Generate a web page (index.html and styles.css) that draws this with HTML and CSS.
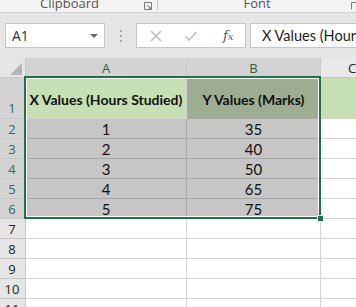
FILE: index.html
```html
<!DOCTYPE html>
<html>
<head>
<meta charset="utf-8">
<link rel="stylesheet" href="styles.css">
</head>
<body>
<div class="app">
  <div class="ribbon">
    <div class="group g-clip"><span class="glabel">Clipboard</span>
      <svg class="launch" width="8" height="8" viewBox="0 0 8 8"><path d="M0.5 7.5V0.5H7.5V7.5H0.5" fill="none" stroke="#7a7a7a" stroke-width="1"/><path d="M3 3L7 7M4.5 7H7V4.5" fill="none" stroke="#7a7a7a" stroke-width="1"/></svg>
    </div>
    <div class="sep"></div>
    <div class="group g-font"><span class="glabel">Font</span>
      <svg class="launch" width="8" height="8" viewBox="0 0 8 8"><path d="M0.5 7.5V0.5H7.5" fill="none" stroke="#7a7a7a" stroke-width="1"/></svg>
    </div>
  </div>
  <div class="fbar">
    <div class="namebox"><span class="nb-text">A1</span>
      <svg class="dd" width="8" height="4" viewBox="0 0 8 4"><path d="M0 0H8L4 4Z" fill="#6a6a6a"/></svg>
    </div>
    <div class="dots"><i></i><i></i><i></i></div>
    <div class="fxbox">
      <svg class="ic" width="14" height="14" viewBox="0 0 14 14"><path d="M2 2L12 12M12 2L2 12" stroke="#bdbdbd" stroke-width="1.6" fill="none"/></svg>
      <svg class="ic" width="14" height="14" viewBox="0 0 14 14"><path d="M1.5 7.5L5 11L12.5 3" stroke="#bdbdbd" stroke-width="1.6" fill="none"/></svg>
      <span class="fx">f<span class="fxx">x</span></span>
    </div>
    <div class="finput">X Values (Hours Studied)</div>
  </div>
  <div class="sheet">
    <div class="grid">
      <div class="corner"><span class="tri"></span></div>
      <div class="ch sel">A</div>
      <div class="ch sel">B</div>
      <div class="ch chc">C</div>

      <div class="rh sel r1">1</div>
      <div class="c r1 g1 bold">X Values (Hours Studied)</div>
      <div class="c r1 g1s bold">Y Values (Marks)</div>
      <div class="c r1 g1 last"></div>

      <div class="rh sel">2</div><div class="c s">1</div><div class="c s">35</div><div class="c last"></div>
      <div class="rh sel">3</div><div class="c s">2</div><div class="c s">40</div><div class="c last"></div>
      <div class="rh sel">4</div><div class="c s">3</div><div class="c s">50</div><div class="c last"></div>
      <div class="rh sel">5</div><div class="c s">4</div><div class="c s">65</div><div class="c last"></div>
      <div class="rh sel">6</div><div class="c s">5</div><div class="c s">75</div><div class="c last"></div>
      <div class="rh">7</div><div class="c"></div><div class="c"></div><div class="c last"></div>
      <div class="rh">8</div><div class="c"></div><div class="c"></div><div class="c last"></div>
      <div class="rh">9</div><div class="c"></div><div class="c"></div><div class="c last"></div>
      <div class="rh">10</div><div class="c"></div><div class="c"></div><div class="c last"></div>
      <div class="rh">11</div><div class="c"></div><div class="c"></div><div class="c last"></div>
    </div>
    <div class="selbox"></div>
    <div class="handle"></div>
  </div>
</div>
</body>
</html>
```
FILE: styles.css
```css
html, body { margin: 0; padding: 0; }
body { width: 356px; height: 307px; overflow: hidden; background: #fff; }
.app { width: 356px; height: 307px; overflow: hidden; font-family: "Open Sans", "Noto Sans", sans-serif; }

.ribbon {
  height: 12px; background: #f3f3f3; border-bottom: 1px solid #d4d4d4;
  display: flex; overflow: hidden;
}
.group { position: relative; display: flex; justify-content: center; }
.g-clip { width: 157px; }
.g-font { flex: 1; }
.glabel { font-size: 13px; color: #555; line-height: 12px; margin-top: -3px; }
.g-clip .glabel { margin-left: -18px; }
.launch { position: absolute; right: 5px; top: 2px; }
.g-font .launch { right: -3px; }
.sep { width: 1px; height: 10px; background: #c6c6c6; }

.fbar {
  height: 45px; background: #e6e6e6;
  display: flex; align-items: flex-start; padding-top: 10px; box-sizing: border-box;
  border-bottom: 1px solid #e0e0e0;
}
.namebox {
  margin-left: 5px; width: 100px; height: 25px; box-sizing: border-box;
  background: #fff; border: 1px solid #c6c6c6;
  display: flex; align-items: center; justify-content: space-between;
  padding: 0 6px 0 6px;
}
.nb-text { font-size: 14px; color: #333; }
.dd { margin-top: 1px; }
.dots { width: 31px; display: flex; flex-direction: column; align-items: center; gap: 3px; padding-top: 7px; }
.dots i { display: block; width: 2px; height: 2px; background: #a8a8a8; }
.fxbox {
  width: 110px; height: 25px; box-sizing: border-box; background: #fff; border: 1px solid #c6c6c6;
  display: flex; align-items: center; padding-left: 12px;
}
.fxbox .ic:first-child { margin-right: 21px; }
.fx { font-family: "DejaVu Serif", "Liberation Serif", serif; font-style: italic; font-size: 13px; color: #555; margin-left: 25px; }
.fxx { font-size: 10px; }
.finput {
  margin-left: 4px; flex: 1; height: 25px; box-sizing: border-box; background: #fff; border: 1px solid #c6c6c6;
  border-right: none; white-space: nowrap; overflow: hidden;
  font-family: "Lato", "Open Sans", sans-serif; font-size: 14.5px; color: #222;
  padding-left: 11px; line-height: 23px;
}

.sheet { position: relative; background: #e6e6e6; }
.grid {
  display: grid;
  grid-template-columns: 26px 161px 134px 40px;
  grid-template-rows: 20px 41px repeat(10, 20px);
}
.corner { background: #e6e6e6; border-right: 1px solid #c8c8c8; border-bottom: 1px solid #c8c8c8; position: relative; box-sizing: border-box; }
.tri {
  position: absolute; right: 3px; bottom: 2px; width: 0; height: 0;
  border-left: 12px solid transparent; border-bottom: 12px solid #b4b4b4;
}
.ch {
  box-sizing: border-box; border-right: 1px solid #c8c8c8; border-bottom: 1px solid #c8c8c8;
  background: #e9e9e9; color: #222; font-size: 13px; display: flex; align-items: center; justify-content: center;
}
.ch.chc { justify-content: flex-start; padding-left: 27px; }
.ch.sel { background: #d3d3d3; color: #2f5f45; }
.rh {
  box-sizing: border-box; border-right: 1px solid #c8c8c8; border-bottom: 1px solid #c8c8c8;
  background: #e6e6e6; color: #222; font-size: 13px;
  display: flex; align-items: center; justify-content: center; padding-right: 1px;
}
.rh.sel { background: #d3d3d3; color: #2f6a55; }
.rh.r1 { align-items: flex-end; padding-bottom: 1px; }
.c {
  box-sizing: border-box; border-right: 1px solid #d4d4d4; border-bottom: 1px solid #d4d4d4;
  background: #fff; font-family: "Lato", "Open Sans", sans-serif; font-size: 15px; color: #111;
  display: flex; align-items: center; justify-content: center; white-space: nowrap; overflow: hidden;
}
.c.last { border-right: none; }
.c.s { background: #c6c6c6; border-color: #a9a9a9; }
.c.g1 { background: #c6e0b4; border-color: #d4d4d4; }
.c.g1s { background: #9dad91; border-color: #a9a9a9; }
.bold { font-weight: 700; font-size: 14px; padding-top: 3px; }

.selbox {
  position: absolute; left: 24px; top: 18px; width: 297px; height: 143px; box-sizing: border-box;
  border: 2px solid #217346; box-shadow: inset 0 0 0 1px #fff;
}
.handle {
  position: absolute; left: 317px; top: 157px; width: 5px; height: 5px;
  background: #217346; border: 1px solid #fff;
}
```
